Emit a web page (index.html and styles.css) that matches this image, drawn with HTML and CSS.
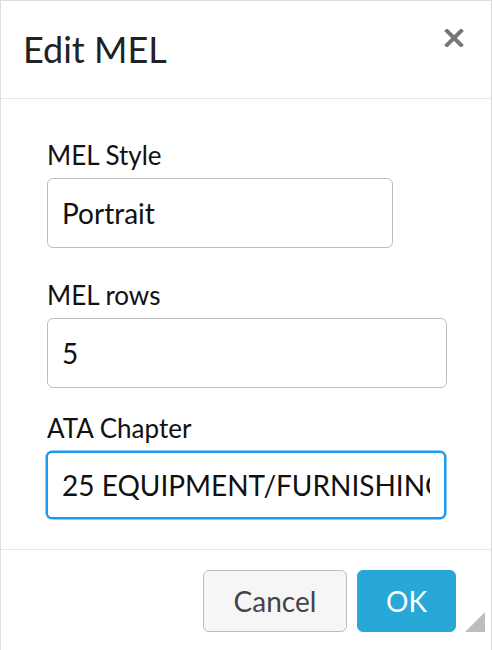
FILE: index.html
```html
<!DOCTYPE html>
<html lang="en">
<head>
    <meta charset="UTF-8">
    <meta name="viewport" content="width=device-width, initial-scale=1.0">
    <title>Edit MEL</title>
    <link rel="stylesheet" href="styles.css">
</head>
<body>
    <div class="dialog">
        <header class="dialog-header">
            <h1 class="dialog-title">Edit MEL</h1>
            <button type="button" class="close-btn" aria-label="Close">
                <svg width="20" height="18" viewBox="0 0 20 18">
                    <path d="M3 2 L17 16 M17 2 L3 16" stroke="#777" stroke-width="4" stroke-linecap="square"/>
                </svg>
            </button>
        </header>

        <form class="dialog-body">
            <label for="mel-style">MEL Style</label>
            <input type="text" id="mel-style" class="field field-short" value="Portrait">

            <label for="mel-rows">MEL rows</label>
            <input type="text" id="mel-rows" class="field field-rows" value="5">

            <label for="ata-chapter">ATA Chapter</label>
            <input type="text" id="ata-chapter" class="field field-focus" value="25 EQUIPMENT/FURNISHINGS">
        </form>

        <footer class="dialog-footer">
            <button type="button" class="btn btn-cancel">Cancel</button>
            <button type="button" class="btn btn-ok">OK</button>
        </footer>

        <svg class="resize-grip" width="20" height="20" viewBox="0 0 20 20">
            <polygon points="20,0 20,20 0,20" fill="#bdbdbd"/>
        </svg>
    </div>
</body>
</html>
```

FILE: styles.css
```css
body {
    margin: 0;
    font-family: Lato, "Open Sans", sans-serif;
    background-color: #ffffff;
}
.dialog {
    position: relative;
    box-sizing: border-box;
    width: 492px;
    height: 650px;
    border: 1px solid #dedede;
    border-bottom: none;
    background: #ffffff;
}
.dialog-header {
    display: flex;
    justify-content: space-between;
    align-items: flex-start;
    height: 98px;
    box-sizing: border-box;
    padding: 30px 27px 0 22px;
    border-bottom: 1px solid #e8e8e8;
}
.dialog-title {
    margin: 0;
    font-size: 36px;
    line-height: 36px;
    font-weight: normal;
    color: #222;
}
.close-btn {
    margin-top: -2px;
    padding: 0;
    border: none;
    background: none;
    cursor: pointer;
}
.close-btn svg {
    display: block;
}
.dialog-body {
    display: flex;
    flex-direction: column;
    align-items: flex-start;
    padding: 40px 0 30px 46px;
    border-bottom: 1px solid #e8e8e8;
}
label {
    font-size: 26px;
    line-height: 32px;
    color: #111;
    margin-bottom: 7px;
}
.field {
    box-sizing: border-box;
    width: 400px;
    height: 70px;
    padding: 0 14px;
    margin-bottom: 31px;
    border: 1px solid #bdbdbd;
    border-radius: 6px;
    font-family: Lato, "Open Sans", sans-serif;
    font-size: 28px;
    color: #111;
    background: #fff;
}
.field-short {
    width: 346px;
}
.field-rows {
    margin-bottom: 24px;
}
.field-focus {
    width: 400px;
    height: 68px;
    margin-bottom: 0;
    margin-left: -1px;
    padding-left: 14px;
    border: 2px solid #1a9bf2;
    box-shadow: 0 0 0 0.5px #1a9bf2;
    outline: none;
}
.dialog-footer {
    display: flex;
    justify-content: flex-end;
    gap: 10px;
    padding: 20px 35px 0 0;
}
.btn {
    height: 62px;
    border-radius: 6px;
    font-family: Lato, "Open Sans", sans-serif;
    font-size: 28px;
    cursor: pointer;
}
.btn-cancel {
    width: 144px;
    background: #f6f6f6;
    border: 1px solid #bdbdbd;
    color: #444;
}
.btn-ok {
    width: 99px;
    background: #27a8d8;
    border: 1px solid #27a8d8;
    color: #ffffff;
}
.resize-grip {
    position: absolute;
    right: 6px;
    bottom: 18px;
}
```
